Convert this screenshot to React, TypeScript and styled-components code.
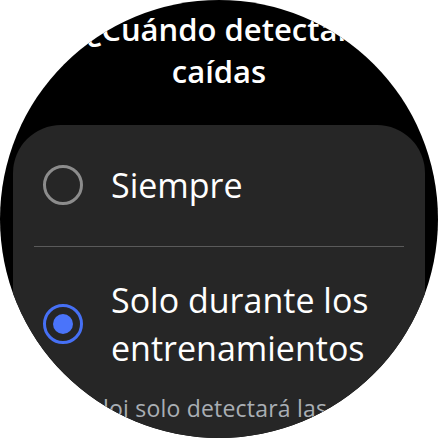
import React from "react";
import styled, { createGlobalStyle } from "styled-components";

const Global = createGlobalStyle`
  html, body { margin: 0; padding: 0; background: #ffffff; }
  #root { width: 438px; height: 438px; }
`;

const Watch = styled.div`
  width: 438px;
  height: 438px;
  border-radius: 50%;
  overflow: hidden;
  background: #000000;
  display: flex;
  flex-direction: column;
  font-family: "Open Sans", "Noto Sans", sans-serif;
`;

const Title = styled.h1`
  margin: 0;
  padding-top: 8px;
  text-align: center;
  color: #ffffff;
  font-size: 31px;
  font-weight: 600;
  line-height: 42px;
  white-space: nowrap;
`;

const Card = styled.div`
  flex: 1;
  margin: 33px 13px 0;
  background: #262626;
  border-radius: 48px 48px 0 0;
  display: flex;
  flex-direction: column;
`;

const OptionRow = styled.div<{ $pt: number; $pb: number }>`
  display: flex;
  align-items: center;
  gap: 28px;
  padding: ${(p) => p.$pt}px 20px ${(p) => p.$pb}px 30px;
`;

const Radio = styled.div<{ $on?: boolean }>`
  width: 40px;
  height: 40px;
  box-sizing: border-box;
  flex-shrink: 0;
  border-radius: 50%;
  border: 3px solid ${(p) => (p.$on ? "#4670f5" : "#8c8c8c")};
  display: flex;
  align-items: center;
  justify-content: center;
`;

const Dot = styled.div`
  width: 20px;
  height: 20px;
  border-radius: 50%;
  background: #4a74fa;
`;

const Label = styled.div`
  color: #ffffff;
  font-size: 34px;
  font-weight: 400;
  line-height: 48px;
`;

const Divider = styled.div`
  height: 1px;
  margin: 0 21px;
  background: #5a5a5a;
`;

const Footer = styled.p`
  margin: 0;
  padding: 16px 20px 0 34px;
  color: #a9aeb4;
  font-size: 23px;
  line-height: 40px;
  letter-spacing: 0.2px;
`;

export default function App() {
  return (
    <>
      <Global />
      <Watch>
        <Title>
          ¿Cuándo detectar
          <br />
          caídas
        </Title>
        <Card>
          <OptionRow $pt={36} $pb={37}>
            <Radio />
            <Label>Siempre</Label>
          </OptionRow>
          <Divider />
          <OptionRow $pt={29} $pb={0}>
            <Radio $on>
              <Dot />
            </Radio>
            <Label>Solo durante los entrenamientos</Label>
          </OptionRow>
          <Footer>Tu reloj solo detectará las caídas durante los entrenamientos.</Footer>
        </Card>
      </Watch>
    </>
  );
}
